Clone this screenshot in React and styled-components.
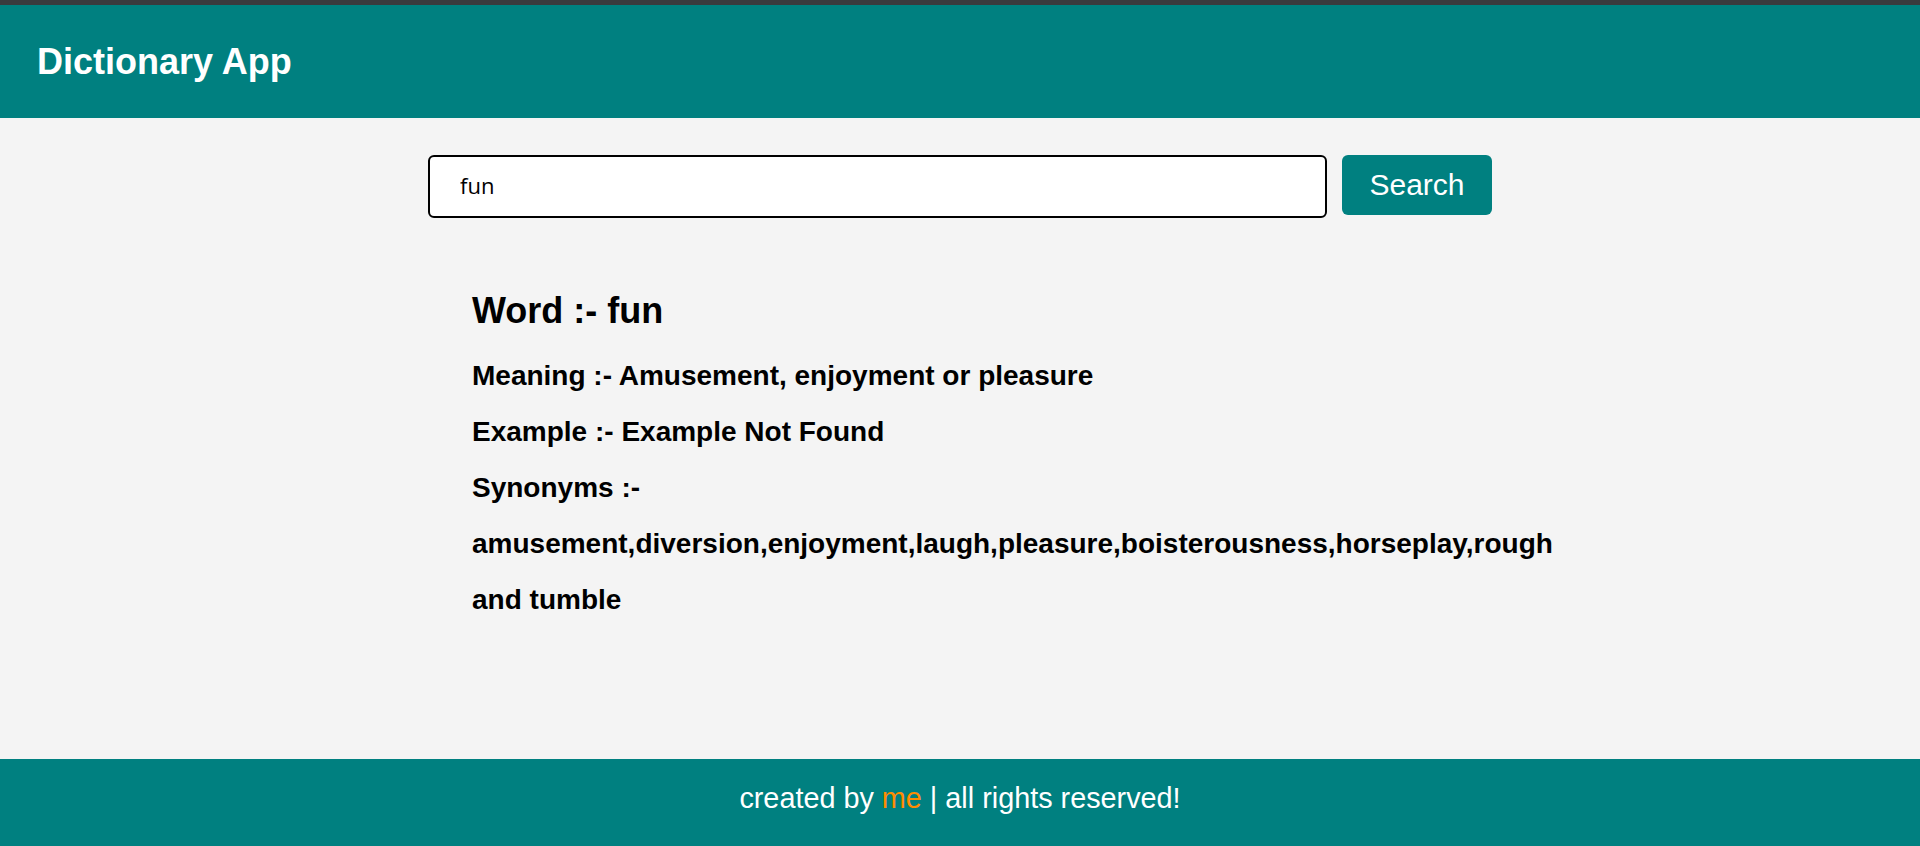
import { useState } from "react";
import styled, { createGlobalStyle } from "styled-components";

const GlobalStyle = createGlobalStyle`
	html, body {
		margin: 0;
		padding: 0;
	}
	body {
		font-family: "Liberation Sans", Arial, sans-serif;
		background: #f4f4f4;
	}
`

const Page = styled.div`
	min-height: 100vh;
	display: flex;
	flex-direction: column;
`

const Header = styled.header`
	background: #008080;
	border-top: 5px solid #3a3a3e;
	height: 113px;
	display: flex;
	align-items: center;
	padding: 0px 0px 0px 37px;
	h1 {
		margin: 0;
		color: #fff;
		font-size: 36px;
		font-weight: 700;
	}
`

const Main = styled.main`
	flex: 1;
	padding: 37px 0px 0px 0px;
`

const SearchRow = styled.form`
	display: flex;
	align-items: flex-start;
	gap: 15px;
	width: 1064px;
	margin: 0 auto;
`

const SearchInput = styled.input`
	box-sizing: border-box;
	width: 899px;
	height: 63px;
	padding: 0px 0px 4px 30px;
	border: 2px solid #000;
	border-radius: 6px;
	background: #fff;
	font-family: "Open Sans", "Noto Sans", sans-serif;
	font-size: 22px;
	color: #000;
	&:focus-visible{
		outline: none;
	}
`

const SearchButton = styled.button`
	width: 150px;
	height: 60px;
	border: none;
	border-radius: 6px;
	background: #008080;
	color: #fff;
	font-family: "Liberation Sans", Arial, sans-serif;
	font-size: 30px;
	cursor: pointer;
`

const Result = styled.section`
	box-sizing: border-box;
	width: 1064px;
	margin: 72px auto 0px auto;
	padding: 0px 44px;
	color: #000;
	h2 {
		margin: 0px 0px 16px 0px;
		font-size: 36px;
		font-weight: 700;
	}
`

const Line = styled.p`
	margin: 0;
	font-size: 28px;
	font-weight: 700;
	line-height: 56px;
`

const Footer = styled.footer`
	box-sizing: border-box;
	background: #008080;
	height: 87px;
	padding: 0px 0px 8px 0px;
	display: flex;
	align-items: center;
	justify-content: center;
	color: #fff;
	font-size: 28.8px;
	span {
		color: #ff8c00;
	}
`

const App = () => {
	const [word, setWord] = useState('fun')

	return(
		<Page>
			<GlobalStyle />
			<Header>
				<h1>Dictionary App</h1>
			</Header>
			<Main>
				<SearchRow onSubmit={e => e.preventDefault()}>
					<SearchInput type="text" value={word} onChange={e => setWord(e.target.value)} />
					<SearchButton type="submit">Search</SearchButton>
				</SearchRow>
				<Result>
					<h2>Word :- fun</h2>
					<Line>Meaning :- Amusement, enjoyment or pleasure</Line>
					<Line>Example :- Example Not Found</Line>
					<Line>Synonyms :- amusement,diversion,enjoyment,laugh,pleasure,boisterousness,horseplay,rough and tumble</Line>
				</Result>
			</Main>
			<Footer>
				<div>created by <span>me</span> | all rights reserved!</div>
			</Footer>
		</Page>
	);
}

export default App
